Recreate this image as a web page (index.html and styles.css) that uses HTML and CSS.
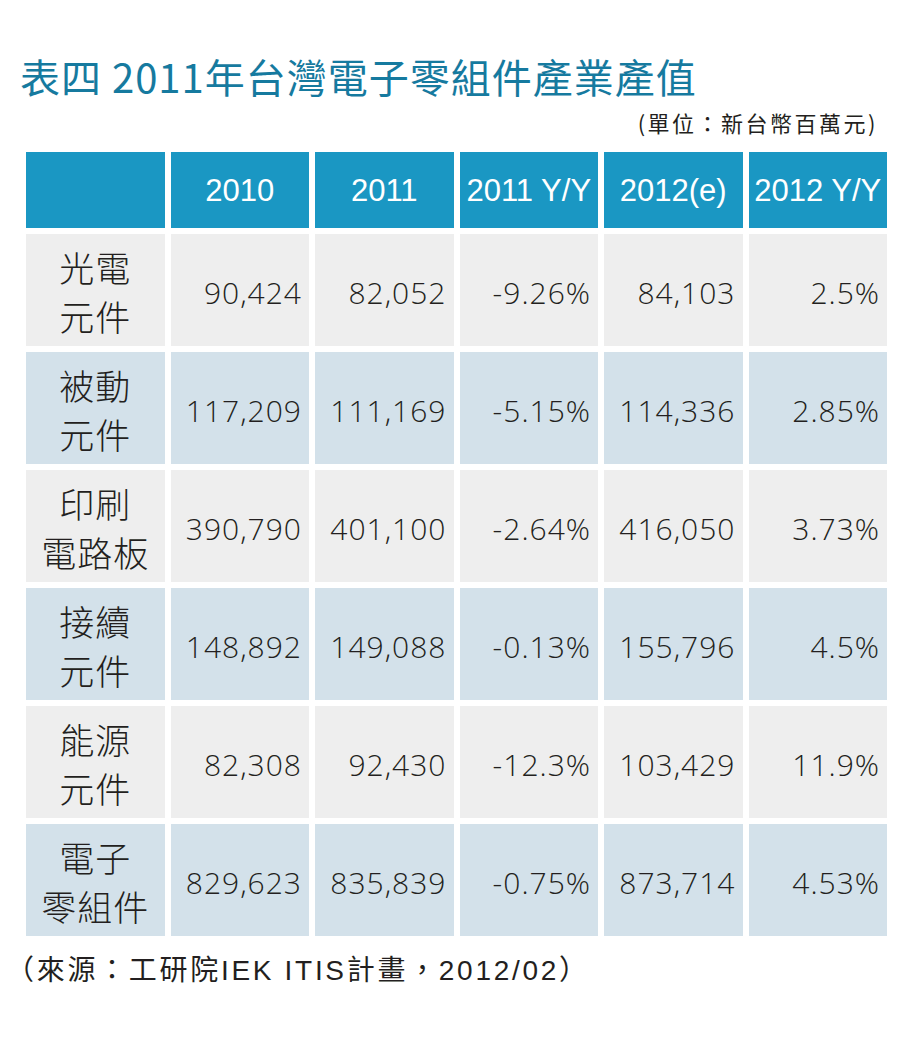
FILE: index.html
```html
<!DOCTYPE html>
<html lang="zh-Hant">
<head>
<meta charset="utf-8">
<title>表四 2011年台灣電子零組件產業產值</title>
<link rel="stylesheet" href="styles.css">
</head>
<body>
<div class="page">
  <h1 class="title">表四 2011年台灣電子零組件產業產值</h1>
  <div class="unit">(單位：新台幣百萬元)</div>
  <div class="table">
    <div class="cell head"></div>
    <div class="cell head">2010</div>
    <div class="cell head">2011</div>
    <div class="cell head">2011 Y/Y</div>
    <div class="cell head">2012(e)</div>
    <div class="cell head">2012 Y/Y</div>

    <div class="cell label gray">光電<br>元件</div>
    <div class="cell num gray">90,424</div>
    <div class="cell num gray">82,052</div>
    <div class="cell num gray">-9.26%</div>
    <div class="cell num gray">84,103</div>
    <div class="cell num gray">2.5%</div>

    <div class="cell label blue">被動<br>元件</div>
    <div class="cell num blue">117,209</div>
    <div class="cell num blue">111,169</div>
    <div class="cell num blue">-5.15%</div>
    <div class="cell num blue">114,336</div>
    <div class="cell num blue">2.85%</div>

    <div class="cell label gray">印刷<br>電路板</div>
    <div class="cell num gray">390,790</div>
    <div class="cell num gray">401,100</div>
    <div class="cell num gray">-2.64%</div>
    <div class="cell num gray">416,050</div>
    <div class="cell num gray">3.73%</div>

    <div class="cell label blue">接續<br>元件</div>
    <div class="cell num blue">148,892</div>
    <div class="cell num blue">149,088</div>
    <div class="cell num blue">-0.13%</div>
    <div class="cell num blue">155,796</div>
    <div class="cell num blue">4.5%</div>

    <div class="cell label gray">能源<br>元件</div>
    <div class="cell num gray">82,308</div>
    <div class="cell num gray">92,430</div>
    <div class="cell num gray">-12.3%</div>
    <div class="cell num gray">103,429</div>
    <div class="cell num gray">11.9%</div>

    <div class="cell label blue">電子<br>零組件</div>
    <div class="cell num blue">829,623</div>
    <div class="cell num blue">835,839</div>
    <div class="cell num blue">-0.75%</div>
    <div class="cell num blue">873,714</div>
    <div class="cell num blue">4.53%</div>
  </div>
  <div class="source">（來源：工研院IEK ITIS計畫，2012/02）</div>
</div>
</body>
</html>
```

FILE: styles.css
```css
* { box-sizing: border-box; }
html, body { margin: 0; padding: 0; background: #ffffff; }
.page {
  width: 912px;
  height: 1052px;
  font-family: "Noto Sans CJK TC", "Noto Sans", sans-serif;
  color: #231f20;
}
.title {
  margin: 0;
  padding: 52px 0 0 20px;
  font-size: 40px;
  line-height: 48px;
  font-weight: 400;
  letter-spacing: 1px;
  color: #167a9f;
  font-family: "Noto Sans CJK TC", sans-serif;
}
.unit {
  margin-top: 8px;
  text-align: right;
  padding-right: 34px;
  font-size: 22px;
  line-height: 28px;
  font-weight: 400;
  letter-spacing: 2.5px;
}
.table {
  margin: 16px 0 0 26px;
  width: 861px;
  display: grid;
  grid-template-columns: repeat(6, 1fr);
  grid-template-rows: 76px repeat(6, 112px);
  gap: 6px;
}
.cell {
  display: flex;
  align-items: center;
}
.head {
  background: #1a97c3;
  color: #ffffff;
  justify-content: center;
  font-family: "Liberation Sans", Arial, sans-serif;
  font-size: 31px;
  padding-top: 2px;
}
.gray { background: #eeeeee; }
.blue { background: #d3e1ea; }
.label {
  justify-content: center;
  text-align: center;
  font-size: 35px;
  line-height: 49px;
  font-weight: 300;
  letter-spacing: 1px;
  padding-top: 2px;
}
.num {
  justify-content: flex-end;
  padding-right: 7px;
  padding-top: 4px;
  font-family: "Open Sans", sans-serif;
  font-weight: 300;
  font-size: 30px;
  letter-spacing: 1px;
}
.source {
  margin-top: 17px;
  padding-left: 6px;
  font-family: "Liberation Sans", "Noto Sans CJK TC", sans-serif;
  font-size: 28px;
  line-height: 36px;
  font-weight: 400;
  letter-spacing: 2.7px;
}
```
